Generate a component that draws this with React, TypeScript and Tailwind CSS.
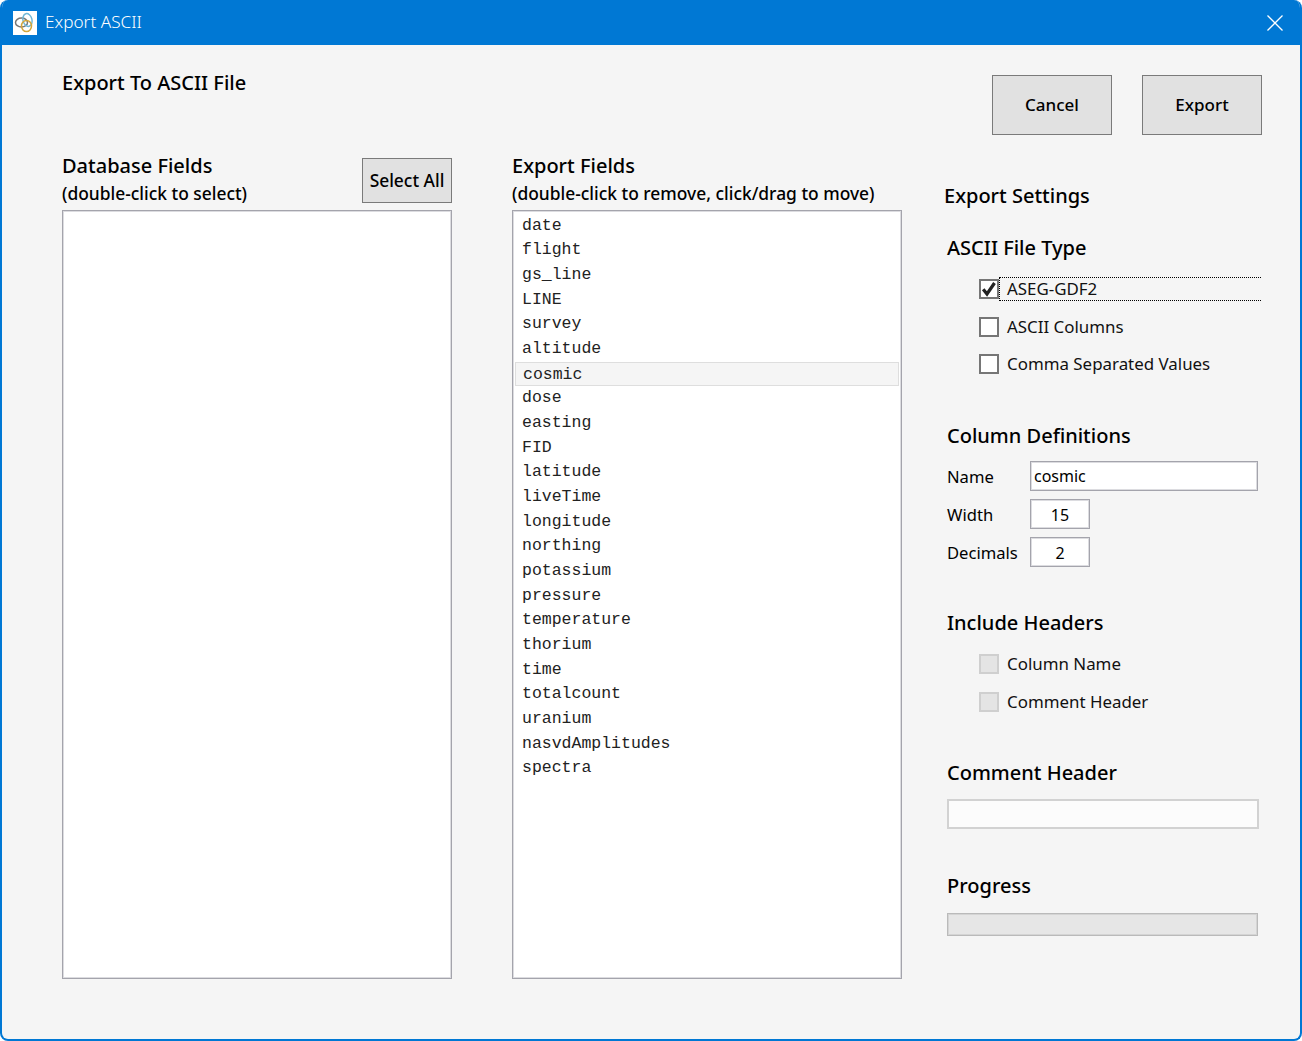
import React from "react";

const exportFields = [
  "date",
  "flight",
  "gs_line",
  "LINE",
  "survey",
  "altitude",
  "cosmic",
  "dose",
  "easting",
  "FID",
  "latitude",
  "liveTime",
  "longitude",
  "northing",
  "potassium",
  "pressure",
  "temperature",
  "thorium",
  "time",
  "totalcount",
  "uranium",
  "nasvdAmplitudes",
  "spectra",
];

const SectionTitle = ({ children, className = "" }: { children: React.ReactNode; className?: string }) => (
  <div className={`text-[20px] leading-[28px] font-medium text-black ${className}`}>{children}</div>
);

const Check = ({ label, checked, disabled, focused }: { label: string; checked?: boolean; disabled?: boolean; focused?: boolean }) => (
  <div className="flex items-center h-[22px] relative">
    <div
      className={`w-5 h-5 border-2 flex items-center justify-center shrink-0 ${
        disabled ? "bg-[#e4e4e4] border-[#cfcfcf]" : "bg-white border-[#767676]"
      }`}
    >
      {checked && (
        <svg width="16" height="16" viewBox="0 0 16 16">
          <path d="M2.2 8.2 L6 13 L13.5 2" fill="none" stroke="#222222" strokeWidth="3.2" />
        </svg>
      )}
    </div>
    <span className="ml-2 text-[16.9px] leading-[22px] text-[#111111]">{label}</span>
    {focused && (
      <div className="absolute left-[20px] -top-px w-[262px] h-[24px] border-y border-l border-dotted border-black" />
    )}
  </div>
);

const NumBox = ({ value }: { value: string }) => (
  <div className="w-[60px] h-[30px] bg-white border border-[#a4a4ac] shadow-[inset_0_0_0_1px_#dcdce0] flex items-center justify-center pt-px text-[16px]">
    {value}
  </div>
);

export default function App() {
  return (
    <div
      className="w-[1302px] h-[1041px] bg-[#f5f5f5] border-2 border-t-0 border-[#0078d4] rounded-lg overflow-hidden flex flex-col text-black"
      style={{ fontFamily: '"Noto Sans", "Open Sans", sans-serif' }}
    >
      {/* Title bar */}
      <div className="h-[45px] bg-[#0078d4] flex items-center shrink-0 -mx-[2px] pl-[13px] pr-[19px] text-white">
        <div className="w-6 h-6 bg-white flex items-center justify-center">
          <svg width="22" height="22" viewBox="0 0 22 22" fill="none">
            <ellipse cx="7.5" cy="10.5" rx="6" ry="4.5" stroke="#777777" strokeWidth="1.5" />
            <ellipse cx="13.5" cy="8" rx="4.5" ry="6.5" stroke="#6fb7d6" strokeWidth="1.5" transform="rotate(-15 13.5 8)" />
            <ellipse cx="12.5" cy="14" rx="5" ry="5.5" stroke="#d2a63c" strokeWidth="1.5" />
          </svg>
        </div>
        <span className="ml-2 -mt-px text-[17.2px] font-light">Export ASCII</span>
        <svg className="ml-auto" width="16" height="16" viewBox="0 0 16 16">
          <path d="M0.5 0.5 L15.5 15.5 M15.5 0.5 L0.5 15.5" stroke="white" strokeWidth="1.3" fill="none" />
        </svg>
      </div>

      <div className="pl-[60px] pr-[38px] flex-1 flex flex-col">
        {/* Header */}
        <div className="flex justify-between pt-[30px]">
          <SectionTitle className="mt-[-6px] text-[20.1px]">Export To ASCII File</SectionTitle>
          <div className="flex gap-[30px]">
            <div className="w-[120px] h-[60px] bg-[#e1e1e1] border border-[#7a7a7a] flex items-center justify-center text-[17px] font-medium">
              Cancel
            </div>
            <div className="w-[120px] h-[60px] bg-[#e1e1e1] border border-[#7a7a7a] flex items-center justify-center text-[17px] font-medium">
              Export
            </div>
          </div>
        </div>

        <div className="flex mt-[17px]">
          {/* Database fields */}
          <div className="w-[390px]">
            <div className="h-[58px] flex justify-between items-start">
              <div>
                <SectionTitle>Database Fields</SectionTitle>
                <div className="text-[17.4px] leading-[26px] font-medium">(double-click to select)</div>
              </div>
              <div className="mt-[6px] w-[90px] h-[45px] bg-[#e1e1e1] border border-[#7a7a7a] flex items-center justify-center text-[17.4px] font-medium">
                Select All
              </div>
            </div>
            <div className="h-[769px] bg-white border border-[#a4a4ac] shadow-[inset_0_0_0_1px_#dcdce0]" />
          </div>

          {/* Export fields */}
          <div className="w-[390px] ml-[60px]">
            <div className="h-[58px]">
              <SectionTitle>Export Fields</SectionTitle>
              <div className="text-[17.4px] leading-[26px] font-medium">(double-click to remove, click/drag to move)</div>
            </div>
            <div
              className="h-[769px] bg-white border border-[#a4a4ac] shadow-[inset_0_0_0_1px_#dcdce0] pt-[2.5px] px-[2px]"
              style={{ fontFamily: '"Liberation Mono", monospace' }}
            >
              {exportFields.map((field) => (
                <div
                  key={field}
                  className={`h-[24.68px] leading-[24px] pl-[7px] text-[16.5px] text-[#222222] ${
                    field === "cosmic" ? "bg-[#f5f5f5] border border-[#dedede] pl-[6px] leading-[22px]" : ""
                  }`}
                >
                  {field}
                </div>
              ))}
            </div>
          </div>

          {/* Export settings */}
          <div className="w-[317px] ml-[42px] pt-[30px]">
            <SectionTitle>Export Settings</SectionTitle>
            <SectionTitle className="mt-[24px] ml-[3px]">ASCII File Type</SectionTitle>
            <div className="ml-[35px] mt-[16px] flex flex-col gap-[15.5px]">
              <Check label="ASEG-GDF2" checked focused />
              <Check label="ASCII Columns" />
              <Check label="Comma Separated Values" />
            </div>

            <SectionTitle className="mt-[47px] ml-[3px]">Column Definitions</SectionTitle>
            <div className="ml-[3px] mt-[11px] flex flex-col gap-[8px] text-[16.6px]">
              <div className="flex items-center">
                <span className="w-[83px] pt-[2px]">Name</span>
                <div className="w-[228px] h-[30px] bg-white border border-[#a4a4ac] shadow-[inset_0_0_0_1px_#dcdce0] flex items-center pl-[3px] text-[16px]">
                  cosmic
                </div>
              </div>
              <div className="flex items-center">
                <span className="w-[83px] pt-[2px]">Width</span>
                <NumBox value="15" />
              </div>
              <div className="flex items-center">
                <span className="w-[83px] pt-[2px]">Decimals</span>
                <NumBox value="2" />
              </div>
            </div>

            <SectionTitle className="mt-[42px] ml-[3px] text-[19.6px]">Include Headers</SectionTitle>
            <div className="ml-[35px] mt-[16px] flex flex-col gap-[15.5px]">
              <Check label="Column Name" disabled />
              <Check label="Comment Header" disabled />
            </div>

            <SectionTitle className="mt-[46px] ml-[3px]">Comment Header</SectionTitle>
            <div className="ml-[3px] mt-[12px] w-[312px] h-[30px] bg-[#fcfcfc] border-2 border-[#d2d2d2]" />

            <SectionTitle className="mt-[43px] ml-[3px]">Progress</SectionTitle>
            <div className="ml-[3px] mt-[13px] w-[311px] h-[23px] bg-[#e6e6e6] border border-[#bababa] shadow-[inset_0_0_0_1px_#d4d4d4]" />
          </div>
        </div>
      </div>
    </div>
  );
}
